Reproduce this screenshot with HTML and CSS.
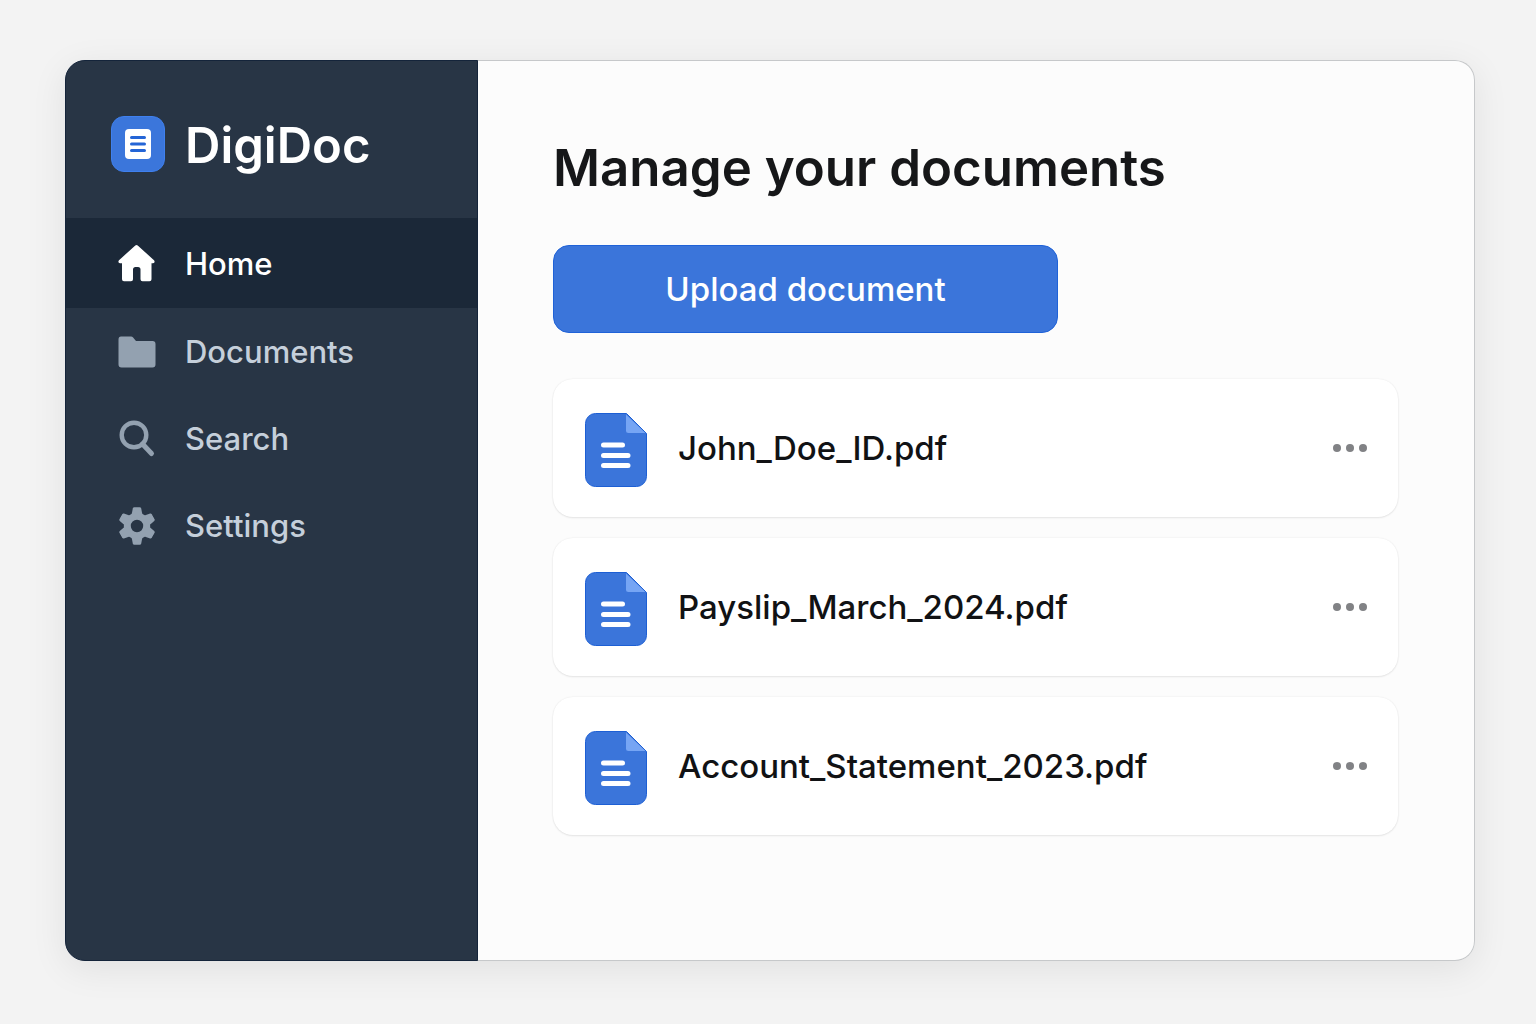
FILE: index.html
```html
<!DOCTYPE html>
<html lang="en">
<head>
<meta charset="utf-8">
<meta name="viewport" content="width=device-width, initial-scale=1">
<title>DigiDoc</title>
<link rel="stylesheet" href="styles.css">
</head>
<body>
<svg class="sprite" aria-hidden="true">
  <symbol id="file" viewBox="0 0 62 74">
    <path class="file-page" d="M10.500 .5H41.500L61.500 20.500V63.500a10 10 0 0 1-10 10H10.500a10 10 0 0 1-10-10V10.500a10 10 0 0 1 10-10Z"/>
    <path class="file-fold" d="M41 1.500L60.500 20H43.500a2.500 2.500 0 0 1-2.500-2.500Z"/>
    <path class="file-lines" d="M18.500 32H37.500M18.500 42.500H43M18.500 52.500H43"/>
  </symbol>
  <symbol id="dots" viewBox="0 0 34 8">
    <circle cx="4" cy="4" r="4"/><circle cx="17" cy="4" r="4"/><circle cx="30" cy="4" r="4"/>
  </symbol>
  <symbol id="tooth" viewBox="0 0 38 38">
    <path d="M13.500 8L14.800 1.500Q15.100 .3 16.300 .3H21.700Q22.900 .3 23.200 1.500L24.500 8Z"/>
  </symbol>
</svg>
<div class="window">
  <aside class="sidebar">
    <div class="brand">
      <svg class="brand-logo" viewBox="0 0 54 56" aria-hidden="true">
        <rect x=".5" y=".5" width="53" height="55" rx="12.500" fill="#3b76db" stroke="#3f80ee"/>
        <rect x="14" y="13" width="26" height="30" rx="4" fill="#fff"/>
        <path d="M20.500 21.500H33.500M20.500 28H33.500M20.500 34.500H33.500" stroke="#2465d6" stroke-width="3" stroke-linecap="round"/>
      </svg>
      <span class="brand-name">DigiDoc</span>
    </div>
    <nav class="nav">
      <a class="nav-item is-active" href="#home" aria-current="page">
        <svg class="nav-icon" viewBox="0 0 38 38" aria-hidden="true"><path d="M17.300 1.500q1.200-1 2.400 0L36 16.200q1.600 2.400-1 3H33.500V35.200q0 2-2 2H24.500q-2 0-2-2V25.500q0-2.500-2.500-2.500H17.500q-2.500 0-2.500 2.500V35.200q0 2-2 2H6q-2 0-2-2V19.200H2q-2.600-.6-1-3Z"/></svg>
        <span>Home</span>
      </a>
      <a class="nav-item" href="#documents">
        <svg class="nav-icon" viewBox="0 0 38 38" aria-hidden="true"><path d="M3 3.500H13q1.300 0 2.100 1L18 8H34.500q3 0 3 3V31.500q0 3-3 3H3.500q-3 0-3-3V6.500q0-3 2.500-3Z"/></svg>
        <span>Documents</span>
      </a>
      <a class="nav-item" href="#search">
        <svg class="nav-icon" viewBox="0 0 38 38" aria-hidden="true"><circle cx="16" cy="15" r="12.300" fill="none" stroke="currentColor" stroke-width="4.400"/><path d="M24.500 24L33.500 33.500" fill="none" stroke="currentColor" stroke-width="5" stroke-linecap="round"/></svg>
        <span>Search</span>
      </a>
      <a class="nav-item" href="#settings">
        <svg class="nav-icon" viewBox="0 0 38 38" aria-hidden="true">
          <circle cx="19" cy="19" r="9.700" fill="none" stroke="currentColor" stroke-width="7"/>
          <use href="#tooth"/>
          <use href="#tooth" transform="rotate(60 19 19)"/>
          <use href="#tooth" transform="rotate(120 19 19)"/>
          <use href="#tooth" transform="rotate(180 19 19)"/>
          <use href="#tooth" transform="rotate(240 19 19)"/>
          <use href="#tooth" transform="rotate(300 19 19)"/>
        </svg>
        <span>Settings</span>
      </a>
    </nav>
  </aside>
  <main class="content">
    <h1 class="title">Manage your documents</h1>
    <button class="upload" type="button">Upload document</button>
    <ul class="files">
      <li class="file-card">
        <svg class="file-icon" aria-hidden="true"><use href="#file"/></svg>
        <span class="file-name">John_Doe_ID.pdf</span>
        <button class="more" type="button" aria-label="More options for John_Doe_ID.pdf"><svg class="more-icon" aria-hidden="true"><use href="#dots"/></svg></button>
      </li>
      <li class="file-card">
        <svg class="file-icon" aria-hidden="true"><use href="#file"/></svg>
        <span class="file-name">Payslip_March_2024.pdf</span>
        <button class="more" type="button" aria-label="More options for Payslip_March_2024.pdf"><svg class="more-icon" aria-hidden="true"><use href="#dots"/></svg></button>
      </li>
      <li class="file-card">
        <svg class="file-icon" aria-hidden="true"><use href="#file"/></svg>
        <span class="file-name">Account_Statement_2023.pdf</span>
        <button class="more" type="button" aria-label="More options for Account_Statement_2023.pdf"><svg class="more-icon" aria-hidden="true"><use href="#dots"/></svg></button>
      </li>
    </ul>
  </main>
</div>
</body>
</html>
```
FILE: styles.css
```css
* {
  box-sizing: border-box;
}

body {
  display: flex;
  min-height: 100vh;
  margin: 0;
  padding: 60px 61px 63px 65px;
  background: #f3f3f3;
  font-family: Inter, "Liberation Sans", sans-serif;
  color: #111214;
}

.sprite {
  position: absolute;
  width: 0;
  height: 0;
}

.window {
  display: flex;
  flex: 1;
  border-radius: 20px;
  background: #fcfcfc;
  box-shadow: inset 0 0 0 1px #c6c8ca, 0 8px 36px rgba(0, 0, 0, 0.08);
}

.sidebar {
  flex: 0 0 413px;
  border: 1px solid #14243a;
  border-radius: 20px 0 0 20px;
  background: #283545;
}

.brand {
  display: flex;
  align-items: center;
  gap: 20px;
  height: 157px;
  padding: 8px 45px 0;
}

.brand-logo {
  flex: none;
  width: 54px;
  height: 56px;
}

.brand-name {
  padding-top: 4px;
  font-size: 49px;
  font-weight: 600;
  line-height: 60px;
  color: #fff;
}

.nav-item {
  display: flex;
  align-items: center;
  gap: 29px;
  height: 87px;
  padding: 0 52px;
  font-size: 31px;
  font-weight: 500;
  color: #c5cfda;
  text-decoration: none;
}

.nav-item.is-active {
  height: 90px;
  background: #1b2838;
  color: #fff;
}

.nav-icon {
  flex: none;
  width: 38px;
  height: 38px;
  fill: currentColor;
  color: #93a1b0;
}

.is-active .nav-icon {
  color: #fff;
}

.content {
  flex: 1;
  min-width: 0;
  padding: 76px 77px 75px 75px;
}

.title {
  margin: 0 0 45px;
  font-size: 51px;
  font-weight: 600;
  line-height: 64px;
  color: #161719;
}

.upload {
  display: block;
  width: 100%;
  max-width: 505px;
  height: 88px;
  margin: 0 0 46px;
  padding: 0;
  border: 1px solid #1f62d8;
  border-radius: 16px;
  background: #3b75da;
  font: 500 33px/40px Inter, "Liberation Sans", sans-serif;
  color: #fff;
}

.files {
  display: grid;
  gap: 21px;
  margin: 0;
  padding: 0;
  list-style: none;
}

.file-card {
  display: flex;
  align-items: center;
  gap: 31px;
  height: 138px;
  padding: 0 31px 0 32px;
  border-radius: 20px;
  background: #fff;
  box-shadow: 0 0 2px rgba(0, 0, 0, 0.08), 0 1px 2px rgba(0, 0, 0, 0.08);
}

.file-icon {
  flex: none;
  width: 62px;
  height: 74px;
  margin-top: 4px;
}

.file-page {
  fill: #3b75da;
  stroke: #1d5fd4;
}

.file-fold {
  fill: #76a5f4;
}

.file-lines {
  fill: none;
  stroke: #fff;
  stroke-width: 5px;
  stroke-linecap: round;
}

.file-name {
  flex: 1;
  min-width: 0;
  font-size: 33px;
  font-weight: 500;
  line-height: 42px;
}

.more {
  display: flex;
  padding: 0;
  border: 0;
  background: none;
}

.more-icon {
  width: 34px;
  height: 8px;
  fill: #818285;
}
```
